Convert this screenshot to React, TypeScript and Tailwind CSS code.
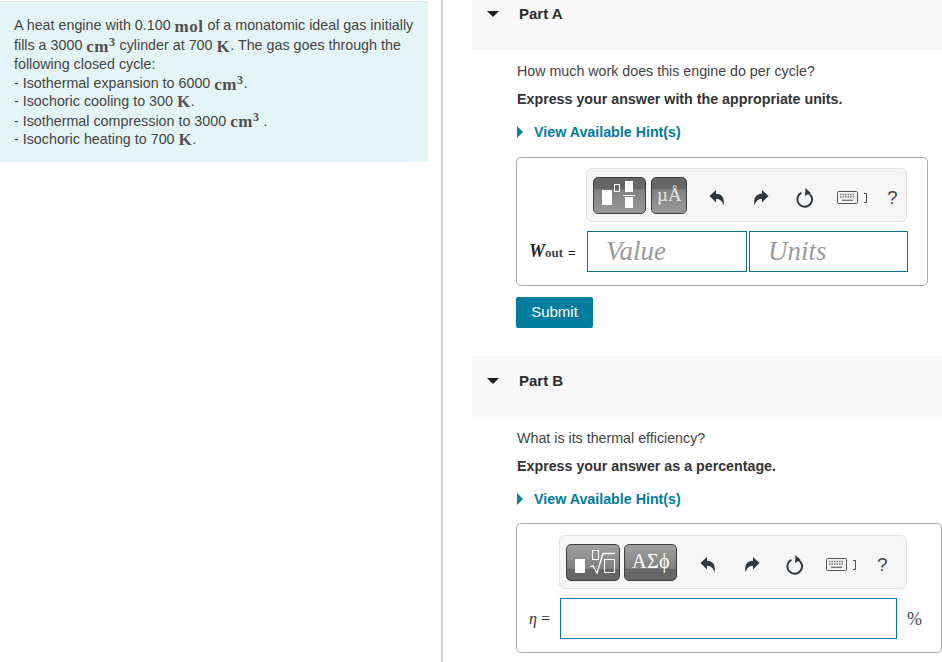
const arial = "font-['Liberation_Sans',Arial,sans-serif]";
const serif = "font-['Liberation_Serif','Times_New_Roman',serif]";

const Unit = ({ children }: { children: React.ReactNode }) => (
  <span className={`${serif} text-[17px] font-bold leading-none tracking-[0.5px] text-[#505050]`}>{children}</span>
);

const Cm3 = () => (
  <Unit>
    cm<sup className="-top-[6px] text-[12px] leading-none">3</sup>
  </Unit>
);

const Box = ({ className }: { className: string }) => <span className={`absolute bg-white ${className}`} />;

const ToolButton = ({ className, children }: { className: string; children: React.ReactNode }) => (
  <div className={`relative h-[37px] overflow-hidden rounded-[5px] border border-[#3d3d3d] ${className}`}>{children}</div>
);

// undo / redo / refresh / keyboard / help, spaced per toolbar through the margins passed in
const Tools = ({ m }: { m: string[] }) => (
  <div className="mt-[5px] flex items-center">
    <svg className={m[0]} width="16" height="17" viewBox="0 0 16 17">
      <path d="M0.500 7 L7 1 V4.800 C12.500 4.800 16 8.500 14.500 16.500 C13 11.500 11 10 7 10 V13.500 Z" fill="#2f3a40" />
    </svg>
    <svg className={m[1]} width="16" height="17" viewBox="0 0 16 17">
      <path d="M15.500 7 L9 1 V4.800 C3.500 4.800 0 8.500 1.500 16.500 C3 11.500 5 10 9 10 V13.500 Z" fill="#2f3a40" />
    </svg>
    <svg className={m[2]} width="18" height="20" viewBox="0 0 18 20">
      <path d="M11.500 4.600 A7.300 7.300 0 1 1 5.500 4.800" fill="none" stroke="#2f3a40" strokeWidth="2" />
      <path d="M9.500 0 L14.500 4.800 L9 8 Z" fill="#2f3a40" />
    </svg>
    <div className={`flex items-center gap-[6px] ${m[3]}`}>
      <svg width="21" height="13" viewBox="0 0 21 13">
        <rect x="0.500" y="0.500" width="20" height="12" rx="1" fill="#f4f4f4" stroke="#555" />
        <path d="M3 3.500 H18 M3 6 H18" stroke="#777" strokeWidth="1.400" strokeDasharray="1.500 1" />
        <path d="M5 9.300 H16" stroke="#777" strokeWidth="1.400" />
      </svg>
      <span className="h-[10px] w-[3px] border-y border-r border-[#555]" />
    </div>
    <span className={`${arial} text-[19px] leading-none text-[#444] ${m[4]}`}>?</span>
  </div>
);

const Hint = () => (
  <div className={`flex items-center pl-[1px] text-[14.25px] font-bold text-[#007c9e] ${arial}`}>
    <span className="h-0 w-0 border-y-[6px] border-l-[6px] border-y-transparent border-l-[#0a7c9c]" />
    <span className="ml-[11px]">View Available Hint(s)</span>
  </div>
);

const PartHeader = ({ title, className }: { title: string; className: string }) => (
  <div className={`flex items-start bg-[#f9f9f9] pl-[15px] ${className}`}>
    <span className="mt-[5px] h-0 w-0 border-x-[6px] border-t-[6px] border-x-transparent border-t-[#1f1f1f]" />
    <span className={`ml-[20px] text-[15px] font-bold leading-[16px] text-[#2b2b2b] ${arial}`}>{title}</span>
  </div>
);

const darkTop = "bg-[linear-gradient(#666_0,#666_32%,#808080_33%,#999_100%)]";
const darkBottom = "bg-[linear-gradient(#a0a0a0_0,#808080_68%,#666_69%,#666_100%)]";

export default function App() {
  return (
    <div className={`flex h-[662px] w-[942px] overflow-hidden bg-white ${arial}`}>
      <div className="h-full w-[443px] shrink-0 border-r-2 border-[#c9d4de]">
        <div className="mt-px h-[161px] w-[428px] border-t border-[#e3e6e6] bg-[#e5f5f7] pl-[14px] pt-[14px] text-[14.3px] text-[#444]">
          <div className="flex h-[20px] items-center whitespace-pre">
            A heat engine with 0.100 <Unit>mol</Unit> of a monatomic ideal gas initially
          </div>
          <div className="flex h-[20px] items-center whitespace-pre">
            fills a 3000 <Cm3 /> cylinder at 700 <Unit>K</Unit>. The gas goes through the
          </div>
          <div className="flex h-[17px] items-center">following closed cycle:</div>
          <div className="flex h-[20px] items-center whitespace-pre pt-[2px]">
            - Isothermal expansion to 6000 <Cm3 />.
          </div>
          <div className="flex h-[17px] items-center whitespace-pre">
            - Isochoric cooling to 300 <Unit>K</Unit>.
          </div>
          <div className="flex h-[21px] items-center whitespace-pre pt-[2px]">
            - Isothermal compression to 3000 <Cm3 /> .
          </div>
          <div className="flex h-[17px] items-center whitespace-pre">
            - Isochoric heating to 700 <Unit>K</Unit>.
          </div>
        </div>
      </div>

      <div className="min-w-0 flex-1 pl-[29px]">
        <PartHeader title="Part A" className="h-[51px] pt-[6px]" />
        <div className="pl-[44px] text-[14.25px] leading-[16px] text-[#444]">
          <p className="ml-px mt-[12px]">How much work does this engine do per cycle?</p>
          <p className="ml-px mt-[12px] font-bold text-[#333]">Express your answer with the appropriate units.</p>
          <div className="mt-[17px]">
            <Hint />
          </div>

          <div className="mt-[17px] h-[129px] w-[412px] rounded-[5px] border border-[#aaa] pl-[12px] pt-[10px]">
            <div className="ml-[57px] flex h-[54px] w-[321px] items-center rounded-[6px] border border-[#e2e2e2] bg-[#f6f6f6] pl-[6px]">
              <ToolButton className={`w-[53px] ${darkTop}`}>
                <Box className="left-[8px] top-[12px] h-[15px] w-[10px]" />
                <span className="absolute left-[20px] top-[6px] h-[8px] w-[6px] border border-white" />
                <Box className="left-[31px] top-[3px] h-[11px] w-[8px]" />
                <Box className="left-[29px] top-[17px] h-[1px] w-[12px]" />
                <Box className="left-[31px] top-[19px] h-[11px] w-[8px]" />
              </ToolButton>
              <ToolButton className={`ml-[5px] w-[36px] ${darkTop}`}>
                <span className={`absolute left-[5px] top-[6px] text-[19px] leading-[22px] text-[#e4e4e4] ${serif}`}>µÅ</span>
              </ToolButton>
              <Tools m={["ml-[22px]", "ml-[28px]", "ml-[27px]", "ml-[23px]", "ml-[20px]"]} />
            </div>
            <div className="mt-[9px] flex h-[41px] items-center">
              <div className={`flex w-[58px] shrink-0 items-baseline text-[#222] ${serif}`}>
                <span className="text-[18px] font-bold italic">W</span>
                <span className="text-[13px] font-bold text-[#444]">out</span>
                <span className={`ml-[5px] text-[13px] ${arial}`}>=</span>
              </div>
              <div className={`flex h-[41px] w-[160px] items-center border border-[#10708c] pb-[2px] pl-[18px] text-[27px] italic text-[#9a9a9a] ${serif}`}>
                Value
              </div>
              <div className={`ml-[2px] flex h-[41px] w-[159px] items-center border border-[#10708c] pb-[2px] pl-[18px] text-[27px] italic text-[#9a9a9a] ${serif}`}>
                Units
              </div>
            </div>
          </div>

          <button className="mt-[11px] flex h-[31px] w-[77px] items-center justify-center rounded-[2px] bg-[#007c9e] pb-[2px] text-[15px] text-white">
            Submit
          </button>
        </div>

        <div className="mt-[28px]">
          <PartHeader title="Part B" className="h-[62px] pt-[17px]" />
        </div>
        <div className="pl-[44px] text-[14.25px] leading-[16px] text-[#444]">
          <p className="ml-px mt-[12px]">What is its thermal efficiency?</p>
          <p className="ml-px mt-[12px] font-bold text-[#333]">Express your answer as a percentage.</p>
          <div className="mt-[17px]">
            <Hint />
          </div>

          <div className="mt-[16px] h-[130px] w-[426px] rounded-[5px] border border-[#aaa] pl-[12px] pt-[11px]">
            <div className="ml-[30px] flex h-[54px] w-[348px] items-center rounded-[6px] border border-[#e2e2e2] bg-[#f6f6f6] pl-[6px]">
              <ToolButton className={`w-[54px] ${darkBottom}`}>
                <Box className="left-[8px] top-[14px] h-[14px] w-[10px]" />
                <span className="absolute left-[25px] top-[5px] h-[10px] w-[7px] border border-white" />
                <svg className="absolute left-[22px] top-[7px]" width="28" height="24" viewBox="0 0 28 24">
                  <path d="M1 15 L4 13.500 L8 21 L14 1.500 H26" fill="none" stroke="#fff" strokeWidth="1.300" />
                </svg>
                <span className="absolute left-[37px] top-[14px] h-[14px] w-[11px] border border-white" />
              </ToolButton>
              <ToolButton className={`ml-[4px] w-[53px] ${darkBottom}`}>
                <span className={`absolute left-[7px] top-[5px] text-[20px] leading-[22px] tracking-[0.5px] text-white ${serif}`}>ΑΣϕ</span>
              </ToolButton>
              <Tools m={["ml-[23px]", "ml-[28px]", "ml-[26px]", "ml-[22px]", "ml-[21px]"]} />
            </div>
            <div className="mt-[9px] flex h-[41px] items-center">
              <div className={`w-[31px] shrink-0 text-[16px] leading-none text-[#333] ${serif}`}>
                <span className="italic">η</span> =
              </div>
              <div className="h-[41px] w-[337px] border border-[#007c9e]" />
              <span className={`ml-[10px] text-[18px] text-[#444] ${serif}`}>%</span>
            </div>
          </div>
        </div>
      </div>
    </div>
  );
}
